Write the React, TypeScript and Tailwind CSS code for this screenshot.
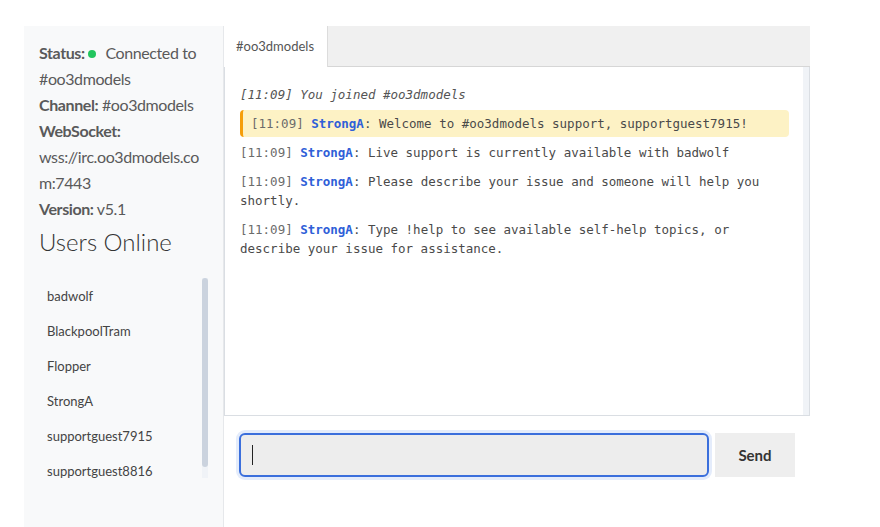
import React from "react";

const users = ["badwolf", "BlackpoolTram", "Flopper", "StrongA", "supportguest7915", "supportguest8816"];

function Msg({ text, highlight }: { text: string; highlight?: boolean }) {
  return (
    <div
      className={
        highlight
          ? "mb-[2px] rounded-[4px] border-l-[3px] border-[#f59e0b] bg-[#fdf2c5] py-1 pl-2 pr-2 leading-[19px]"
          : "mb-[2px] py-1 leading-[19px]"
      }
    >
      <span className="text-[#6b6b6b]">[11:09]</span>{" "}
      <span className="font-bold text-[#2f5fd8]">StrongA</span>
      <span className="text-[#4a4a4a]">: {text}</span>
    </div>
  );
}

export default function App() {
  return (
    <div className="flex h-screen bg-white pl-[24px] pt-[26px]">
      <aside
        className="flex w-[200px] shrink-0 flex-col border-r border-[#e6e8eb] bg-[#f8f9fa] pl-[15px] pr-[15px] pt-[14px] text-[#5a5a5a]"
        style={{ fontFamily: "Lato, 'Noto Sans', sans-serif" }}
      >
        <div className="w-[166px] text-[16px] leading-[26px] tracking-[-0.4px]">
          <div>
            <span className="font-bold">Status:</span>
            <span className="ml-[3px] mr-[6px] inline-block h-[8px] w-[8px] rounded-full bg-[#22c55e] align-[1px]"></span>{" "}
            Connected to #oo3dmodels
          </div>
          <div>
            <span className="font-bold">Channel:</span> #oo3dmodels
          </div>
          <div>
            <span className="font-bold">WebSocket:</span>
          </div>
          <div className="break-all">wss://irc.oo3dmodels.com:7443</div>
          <div>
            <span className="font-bold">Version:</span> v5.1
          </div>
        </div>
        <h2 className="mt-[5px] text-[24px] font-light leading-[29px] text-[#333]">Users Online</h2>
        <div className="relative mt-[22px] h-[200px]">
          <ul className="h-[200px] overflow-hidden pl-[8px] pr-[6px] pt-[1px] text-[13px] text-[#444]">
            {users.map((u) => (
              <li key={u} className="flex h-[35px] items-center">
                {u}
              </li>
            ))}
          </ul>
          <div className="absolute right-0 top-0 h-[200px] w-[6px] bg-[#f0f3f7]">
            <div className="h-[189px] w-[6px] rounded-[3px] bg-[#cbd3de]"></div>
          </div>
        </div>
      </aside>

      <main className="flex w-[586px] flex-col">
        <div className="flex h-[41px] shrink-0 border-b border-[#d6d6d6] bg-[#f0f0f0]">
          <div
            className="flex h-[41px] w-[104px] items-center border-r border-[#dcdcdc] bg-white px-[12px] text-[13px] text-[#555]"
            style={{ fontFamily: "Lato, 'Noto Sans', sans-serif" }}
          >
            #oo3dmodels
          </div>
        </div>
        <div className="flex min-h-0 flex-1 border-x border-b border-[#dadee3] bg-white">
          <div
            className="min-w-0 flex-1 overflow-hidden pl-[15px] pr-[14px] pt-[14px] text-[12.5px]"
            style={{ fontFamily: "'DejaVu Sans Mono', monospace" }}
          >
            <div className="mb-[2px] py-1 italic leading-[19px] text-[#555]">[11:09] You joined #oo3dmodels</div>
            <Msg highlight text="Welcome to #oo3dmodels support, supportguest7915!" />
            <Msg text="Live support is currently available with badwolf" />
            <Msg text="Please describe your issue and someone will help you shortly." />
            <Msg text="Type !help to see available self-help topics, or describe your issue for assistance." />
          </div>
          <div className="w-[6px] shrink-0 bg-[#f0f3f7]"></div>
        </div>
        <div className="flex h-[111px] shrink-0 gap-[6px] pl-[15px] pr-[15px] pt-[17px]">
          <div className="relative h-[44px] w-[470px]">
            <input
              className="h-[44px] w-[470px] rounded-[6px] border-2 border-[#3b6fdc] bg-[#ededed] px-[11px] text-[15px] text-[#333] caret-transparent shadow-[0_0_0_3px_#e4ecfb] outline-none"
            />
            <span className="absolute left-[13px] top-[12px] h-[20px] w-[1px] bg-[#222]"></span>
          </div>
          <button
            className="h-[44px] w-[80px] bg-[#eeeeee] text-[15px] font-bold text-[#333]"
            style={{ fontFamily: "Lato, 'Noto Sans', sans-serif" }}
          >
            Send
          </button>
        </div>
      </main>
    </div>
  );
}
